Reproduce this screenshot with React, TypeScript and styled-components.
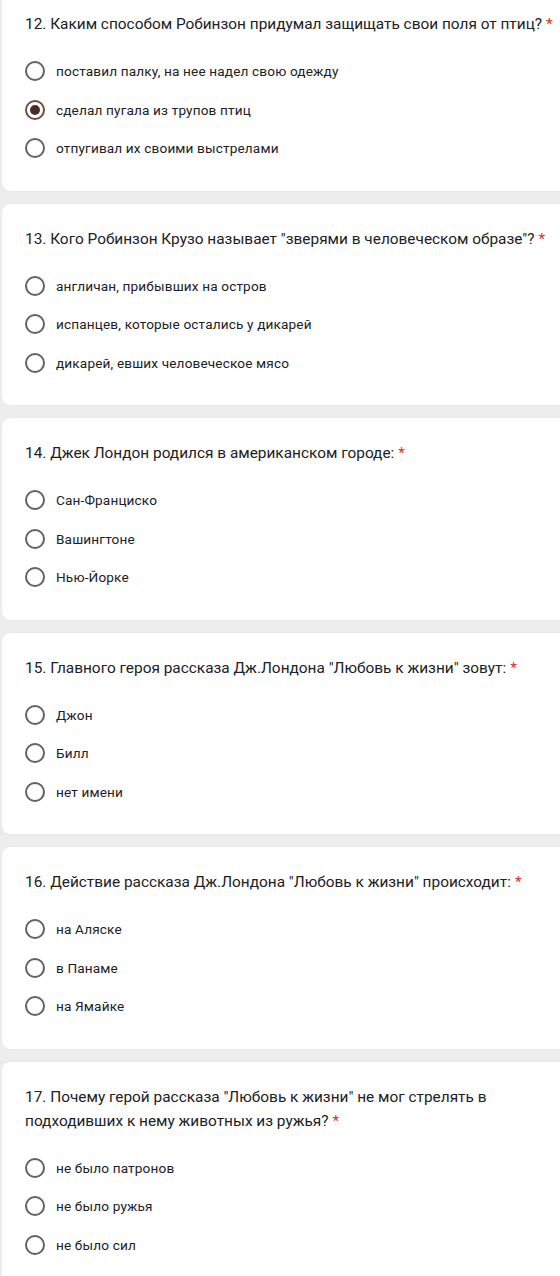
import React from 'react'
import styled, { createGlobalStyle } from 'styled-components'

const GlobalStyle = createGlobalStyle`
  html, body {
    margin: 0;
    padding: 0;
    background: #ededed;
  }
  body {
    font-family: Roboto, "Noto Sans", Arial, sans-serif;
    color: #202124;
    overflow: hidden;
  }
`

// Styling for the list of question cards.
const Page = styled.div`
  display: flex;
  flex-direction: column;
  gap: 13px;
  margin-top: -11px;
  padding-left: 2px;
  width: 580px;
`

const Card = styled.div`
  background: #fff;
  border-radius: 8px;
  padding: 23px 0 23px 23px;
  box-shadow: 0 0 1px rgba(0, 0, 0, 0.12);
`

const Question = styled.div`
  font-size: 15.4px;
  line-height: 24px;
  color: #202124;
  margin-bottom: 16px;
`

const Required = styled.span`
  color: #d93025;
  margin-left: 4px;
`

const Option = styled.label`
  display: flex;
  align-items: center;
  height: 38.5px;
  font-size: 13.6px;
  letter-spacing: 0.15px;
  color: #202124;
`

const Radio = styled.span<{ checked?: boolean }>`
  box-sizing: border-box;
  width: 20px;
  height: 20px;
  border-radius: 50%;
  border: 2px solid ${p => (p.checked ? '#6f4a45' : '#5f6368')};
  margin-right: 11px;
  display: flex;
  align-items: center;
  justify-content: center;
  flex-shrink: 0;

  &::after {
    content: '';
    display: ${p => (p.checked ? 'block' : 'none')};
    width: 10px;
    height: 10px;
    border-radius: 50%;
    background: #4a2c27;
  }
`

interface Item {
  title: React.ReactNode
  options: string[]
  checked?: number
}

const items: Item[] = [
  {
    title: '12. Каким способом Робинзон придумал защищать свои поля от птиц?',
    options: ['поставил палку, на нее надел свою одежду', 'сделал пугала из трупов птиц', 'отпугивал их своими выстрелами'],
    checked: 1
  },
  {
    title: '13. Кого Робинзон Крузо называет "зверями в человеческом образе"?',
    options: ['англичан, прибывших на остров', 'испанцев, которые остались у дикарей', 'дикарей, евших человеческое мясо']
  },
  {
    title: '14. Джек Лондон родился в американском городе:',
    options: ['Сан-Франциско', 'Вашингтоне', 'Нью-Йорке']
  },
  {
    title: '15. Главного героя рассказа Дж.Лондона "Любовь к жизни" зовут:',
    options: ['Джон', 'Билл', 'нет имени']
  },
  {
    title: '16. Действие рассказа Дж.Лондона "Любовь к жизни" происходит:',
    options: ['на Аляске', 'в Панаме', 'на Ямайке']
  },
  {
    title: (
      <>
        17. Почему герой рассказа "Любовь к жизни" не мог стрелять в
        <br />
        подходивших к нему животных из ружья?
      </>
    ),
    options: ['не было патронов', 'не было ружья', 'не было сил']
  }
]

const App = () => {
  return (
    <>
      <GlobalStyle />
      <Page>
        {items.map((item, i) => (
          <Card key={i}>
            <Question>
              {item.title}
              <Required>*</Required>
            </Question>
            {item.options.map((opt, j) => (
              <Option key={j}>
                <Radio checked={item.checked === j} />
                {opt}
              </Option>
            ))}
          </Card>
        ))}
      </Page>
    </>
  )
}

export default App
